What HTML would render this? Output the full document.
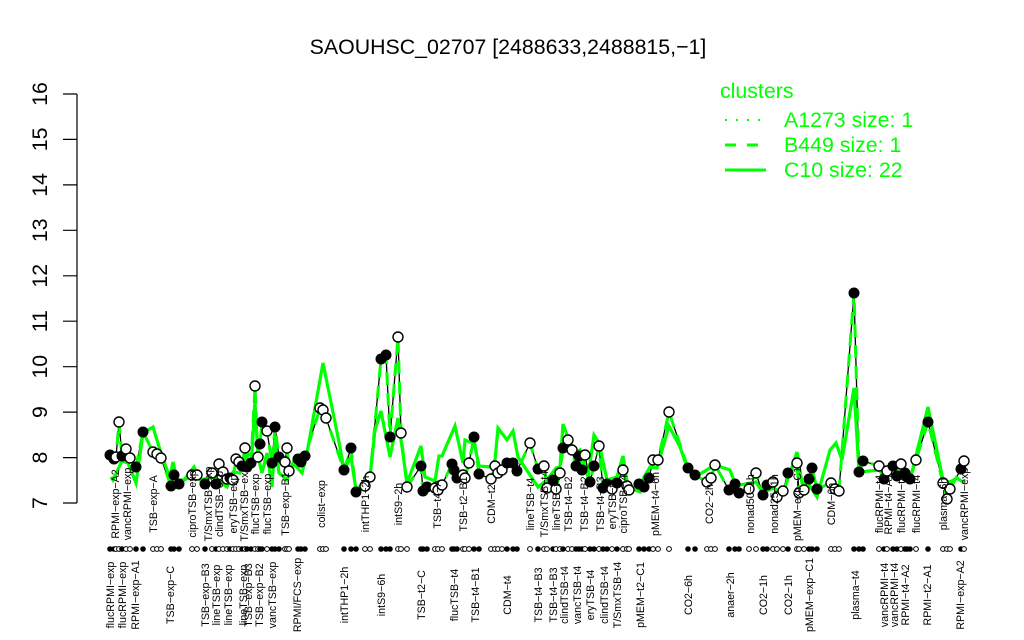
<!DOCTYPE html>
<html><head><meta charset="utf-8"><style>
html,body{margin:0;padding:0;background:#fff}
svg{display:block}
text{font-family:"Liberation Sans",sans-serif}
.l text{font-size:10.67px;text-anchor:middle;fill:#000}
.p circle.f{fill:#000;stroke:#000;stroke-width:1;r:5px}
.p circle.o{fill:#fff;stroke:#000;stroke-width:1.4px;r:5px}
.r circle.f{fill:#000;stroke:#000;stroke-width:.8;r:2.4px}
.r circle.o{fill:#fff;stroke:#000;stroke-width:1;r:2.4px}
</style></head><body>
<svg xmlns="http://www.w3.org/2000/svg" width="1024" height="640" viewBox="0 0 1024 640">
<rect width="1024" height="640" fill="#fff"/>
<text x="508" y="54" font-size="21.33" text-anchor="middle">SAOUHSC_02707 [2488633,2488815,−1]</text>
<g stroke="#000" stroke-width="1.2" fill="none">
<path d="M77 94V503M63 94H77M63 139.400H77M63 184.900H77M63 230.300H77M63 275.800H77M63 321.200H77M63 366.700H77M63 412.100H77M63 457.600H77M63 503H77"/>
</g>
<g font-size="21.33" text-anchor="middle">
<text transform="translate(47,94) rotate(-90)">16</text>
<text transform="translate(47,139.400) rotate(-90)">15</text>
<text transform="translate(47,184.900) rotate(-90)">14</text>
<text transform="translate(47,230.300) rotate(-90)">13</text>
<text transform="translate(47,275.800) rotate(-90)">12</text>
<text transform="translate(47,321.200) rotate(-90)">11</text>
<text transform="translate(47,366.700) rotate(-90)">10</text>
<text transform="translate(47,412.100) rotate(-90)">9</text>
<text transform="translate(47,457.600) rotate(-90)">8</text>
<text transform="translate(47,503) rotate(-90)">7</text>
</g>
<path id="b" fill="none" stroke="#000" stroke-width="1.3" d="M110 455L114 459L116 457L119 422L122 456L126 449L130 458L136 467L143 432L153 452L157 454L161 458L171 486L174 475L179 484L192 475L197 475L205 484L212 473L216 484L219 464L223 472L227 479L230 478L233 480L236 459L239 462L242 466L245 448L247 467L251 463L255 386L258 457L260 444L262 422L267 431L272 463L275 427L279 457L285 462L287 448L289 471L298 459L301 462L305 456L320 408L323 410L326 418L344 470L351 448L356 492L365 486L370 477L381 359L386 355L390 437L398 337L401 433L407 487L421 466L423 491L427 487L435 488L438 490L442 485L452 464L454 470L457 478L463 475L465 478L469 463L474 437L479 474L491 479L495 466L498 473L502 470L507 463L513 463L517 471L530 443L538 469L544 466L547 488L553 480L556 489L560 473L563 448L568 440L572 450L576 466L579 456L582 470L585 455L590 482L594 466L599 446L603 488L607 484L612 489L617 483L623 470L627 486L629 490L639 484L644 487L649 478L653 460L658 460L669 412L688 468L695 475L707 482L711 478L715 465L729 490L735 484L739 493L749 489L756 473L763 495L767 485L773 482L777 497L783 491L788 473L797 463L799 493L804 490L809 479L812 468L817 489L831 483L835 489L839 491L854 293L859 472L863 461L879 466L884 479L887 471L893 466L897 476L901 464L905 473L907 477L910 479L916 460L928 422L943 483L947 499L950 489L961 469L964 461"/>
<path fill="none" stroke="#00ff00" stroke-width="3" stroke-dasharray="13 8" d="M110 455L114 459L116 457L119 422L122 456L126 449L130 458L136 467L143 432L153 452L157 454L161 458L171 486L174 475L179 484L192 475L197 475L205 484L212 473L216 484L219 464L223 472L227 479L230 478L233 480L236 459L239 462L242 466L245 448L247 467L251 463L255 386L258 457L260 444L262 422L267 431L272 463L275 427L279 457L285 462L287 448L289 471L298 459L301 462L305 456L320 408L323 410L326 418L344 470L351 448L356 492L365 486L370 477L381 359L386 355L390 437L398 337L401 433L407 487L421 466L423 491L427 487L435 488L438 490L442 485L452 464L454 470L457 478L463 475L465 478L469 463L474 437L479 474L491 479L495 466L498 473L502 470L507 463L513 463L517 471L530 443L538 469L544 466L547 488L553 480L556 489L560 473L563 448L568 440L572 450L576 466L579 456L582 470L585 455L590 482L594 466L599 446L603 488L607 484L612 489L617 483L623 470L627 486L629 490L639 484L644 487L649 478L653 460L658 460L669 412L688 468L695 475L707 482L711 478L715 465L729 490L735 484L739 493L749 489L756 473L763 495L767 485L773 482L777 497L783 491L788 473L797 463L799 493L804 490L809 479L812 468L817 489L831 483L835 489L839 491L854 293L859 472L863 461L879 466L884 479L887 471L893 466L897 476L901 464L905 473L907 477L910 479L916 460L928 422L943 483L947 499L950 489L961 469L964 461"/>
<path fill="none" stroke="#00ff00" stroke-width="3.2" stroke-linejoin="miter" d="M111 477L113 480L122 461L128 463L136 483L143 433L153 427L160 450L167 470L170 477L173 462L177 480L184 480L194 467L200 480L213 477L227 487L233 472L240 473L248 455L252 453L255 403L258 457L262 473L267 453L272 487L275 440L279 473L287 480L293 463L302 473L307 453L323 363L340 447L344 470L351 457L356 490L370 477L375 430L381 411L390 457L398 418L407 483L421 446L425 477L435 481L439 456L442 456L455 426L463 463L465 440L470 442L474 442L479 466L490 467L495 460L498 428L507 440L513 431L518 457L538 487L547 480L556 468L560 467L563 424L570 443L577 452L580 450L588 477L594 435L599 443L607 480L617 477L623 456L628 487L640 492L644 477L650 467L657 468L669 426L680 447L688 470L695 477L715 465L730 470L735 483L740 485L756 482L763 493L773 488L783 493L797 452L802 483L808 483L817 497L830 450L836 443L842 460L854 388L859 472L880 470L884 480L893 466L910 480L928 407L943 480L950 482L957 478L964 483"/>
<g class="p">
<circle class="f" cx="110" cy="455"/><circle class="f" cx="114" cy="459"/><circle class="o" cx="116" cy="457"/><circle class="o" cx="119" cy="422"/><circle class="f" cx="122" cy="456"/><circle class="o" cx="126" cy="449"/><circle class="o" cx="130" cy="458"/><circle class="f" cx="136" cy="467"/><circle class="f" cx="143" cy="432"/><circle class="o" cx="153" cy="452"/><circle class="o" cx="157" cy="454"/><circle class="o" cx="161" cy="458"/><circle class="f" cx="171" cy="486"/><circle class="f" cx="174" cy="475"/><circle class="f" cx="179" cy="484"/><circle class="o" cx="192" cy="475"/><circle class="o" cx="197" cy="475"/><circle class="f" cx="205" cy="484"/><circle class="o" cx="212" cy="473"/><circle class="f" cx="216" cy="484"/><circle class="o" cx="219" cy="464"/><circle class="o" cx="223" cy="472"/><circle class="o" cx="227" cy="479"/><circle class="f" cx="230" cy="478"/><circle class="o" cx="233" cy="480"/><circle class="o" cx="236" cy="459"/><circle class="o" cx="239" cy="462"/><circle class="f" cx="242" cy="466"/><circle class="o" cx="245" cy="448"/><circle class="f" cx="247" cy="467"/><circle class="f" cx="251" cy="463"/><circle class="o" cx="255" cy="386"/><circle class="o" cx="258" cy="457"/><circle class="f" cx="260" cy="444"/><circle class="f" cx="262" cy="422"/><circle class="o" cx="267" cy="431"/><circle class="f" cx="272" cy="463"/><circle class="f" cx="275" cy="427"/><circle class="f" cx="279" cy="457"/><circle class="o" cx="285" cy="462"/><circle class="o" cx="287" cy="448"/><circle class="o" cx="289" cy="471"/><circle class="f" cx="298" cy="459"/><circle class="f" cx="301" cy="462"/><circle class="f" cx="305" cy="456"/><circle class="o" cx="320" cy="408"/><circle class="o" cx="323" cy="410"/><circle class="o" cx="326" cy="418"/><circle class="f" cx="344" cy="470"/><circle class="f" cx="351" cy="448"/><circle class="f" cx="356" cy="492"/><circle class="o" cx="365" cy="486"/><circle class="o" cx="370" cy="477"/><circle class="f" cx="381" cy="359"/><circle class="f" cx="386" cy="355"/><circle class="f" cx="390" cy="437"/><circle class="o" cx="398" cy="337"/><circle class="o" cx="401" cy="433"/><circle class="o" cx="407" cy="487"/><circle class="f" cx="421" cy="466"/><circle class="f" cx="423" cy="491"/><circle class="f" cx="427" cy="487"/><circle class="o" cx="435" cy="488"/><circle class="o" cx="438" cy="490"/><circle class="o" cx="442" cy="485"/><circle class="f" cx="452" cy="464"/><circle class="f" cx="454" cy="470"/><circle class="f" cx="457" cy="478"/><circle class="o" cx="463" cy="475"/><circle class="o" cx="465" cy="478"/><circle class="o" cx="469" cy="463"/><circle class="f" cx="474" cy="437"/><circle class="f" cx="479" cy="474"/><circle class="o" cx="491" cy="479"/><circle class="o" cx="495" cy="466"/><circle class="o" cx="498" cy="473"/><circle class="o" cx="502" cy="470"/><circle class="f" cx="507" cy="463"/><circle class="f" cx="513" cy="463"/><circle class="f" cx="517" cy="471"/><circle class="o" cx="530" cy="443"/><circle class="f" cx="538" cy="469"/><circle class="o" cx="544" cy="466"/><circle class="o" cx="547" cy="488"/><circle class="f" cx="553" cy="480"/><circle class="o" cx="556" cy="489"/><circle class="o" cx="560" cy="473"/><circle class="f" cx="563" cy="448"/><circle class="o" cx="568" cy="440"/><circle class="o" cx="572" cy="450"/><circle class="f" cx="576" cy="466"/><circle class="f" cx="579" cy="456"/><circle class="f" cx="582" cy="470"/><circle class="o" cx="585" cy="455"/><circle class="f" cx="590" cy="482"/><circle class="f" cx="594" cy="466"/><circle class="o" cx="599" cy="446"/><circle class="f" cx="603" cy="488"/><circle class="f" cx="607" cy="484"/><circle class="o" cx="612" cy="489"/><circle class="f" cx="617" cy="483"/><circle class="o" cx="623" cy="470"/><circle class="o" cx="627" cy="486"/><circle class="o" cx="629" cy="490"/><circle class="f" cx="639" cy="484"/><circle class="f" cx="644" cy="487"/><circle class="f" cx="649" cy="478"/><circle class="o" cx="653" cy="460"/><circle class="o" cx="658" cy="460"/><circle class="o" cx="669" cy="412"/><circle class="f" cx="688" cy="468"/><circle class="f" cx="695" cy="475"/><circle class="o" cx="707" cy="482"/><circle class="o" cx="711" cy="478"/><circle class="o" cx="715" cy="465"/><circle class="f" cx="729" cy="490"/><circle class="f" cx="735" cy="484"/><circle class="f" cx="739" cy="493"/><circle class="o" cx="749" cy="489"/><circle class="o" cx="756" cy="473"/><circle class="f" cx="763" cy="495"/><circle class="f" cx="767" cy="485"/><circle class="o" cx="773" cy="482"/><circle class="o" cx="777" cy="497"/><circle class="o" cx="783" cy="491"/><circle class="f" cx="788" cy="473"/><circle class="o" cx="797" cy="463"/><circle class="o" cx="799" cy="493"/><circle class="o" cx="804" cy="490"/><circle class="f" cx="809" cy="479"/><circle class="f" cx="812" cy="468"/><circle class="f" cx="817" cy="489"/><circle class="o" cx="831" cy="483"/><circle class="o" cx="835" cy="489"/><circle class="o" cx="839" cy="491"/><circle class="f" cx="854" cy="293"/><circle class="f" cx="859" cy="472"/><circle class="f" cx="863" cy="461"/><circle class="o" cx="879" cy="466"/><circle class="f" cx="884" cy="479"/><circle class="o" cx="887" cy="471"/><circle class="f" cx="893" cy="466"/><circle class="f" cx="897" cy="476"/><circle class="o" cx="901" cy="464"/><circle class="f" cx="905" cy="473"/><circle class="f" cx="907" cy="477"/><circle class="f" cx="910" cy="479"/><circle class="o" cx="916" cy="460"/><circle class="f" cx="928" cy="422"/><circle class="o" cx="943" cy="483"/><circle class="o" cx="947" cy="499"/><circle class="o" cx="950" cy="489"/><circle class="f" cx="961" cy="469"/><circle class="o" cx="964" cy="461"/>
</g>
<g class="r" transform="translate(0,549)">
<circle class="f" cx="110"/><circle class="f" cx="114"/><circle class="o" cx="116"/><circle class="o" cx="119"/><circle class="f" cx="122"/><circle class="o" cx="126"/><circle class="o" cx="130"/><circle class="f" cx="136"/><circle class="f" cx="143"/><circle class="o" cx="153"/><circle class="o" cx="157"/><circle class="o" cx="161"/><circle class="f" cx="171"/><circle class="f" cx="174"/><circle class="f" cx="179"/><circle class="o" cx="192"/><circle class="o" cx="197"/><circle class="f" cx="205"/><circle class="o" cx="212"/><circle class="f" cx="216"/><circle class="o" cx="219"/><circle class="o" cx="223"/><circle class="o" cx="227"/><circle class="f" cx="230"/><circle class="o" cx="233"/><circle class="o" cx="236"/><circle class="o" cx="239"/><circle class="f" cx="242"/><circle class="o" cx="245"/><circle class="f" cx="247"/><circle class="f" cx="251"/><circle class="o" cx="255"/><circle class="o" cx="258"/><circle class="f" cx="260"/><circle class="f" cx="262"/><circle class="o" cx="267"/><circle class="f" cx="272"/><circle class="f" cx="275"/><circle class="f" cx="279"/><circle class="o" cx="285"/><circle class="o" cx="287"/><circle class="o" cx="289"/><circle class="f" cx="298"/><circle class="f" cx="301"/><circle class="f" cx="305"/><circle class="o" cx="320"/><circle class="o" cx="323"/><circle class="o" cx="326"/><circle class="f" cx="344"/><circle class="f" cx="351"/><circle class="f" cx="356"/><circle class="o" cx="365"/><circle class="o" cx="370"/><circle class="f" cx="381"/><circle class="f" cx="386"/><circle class="f" cx="390"/><circle class="o" cx="398"/><circle class="o" cx="401"/><circle class="o" cx="407"/><circle class="f" cx="421"/><circle class="f" cx="423"/><circle class="f" cx="427"/><circle class="o" cx="435"/><circle class="o" cx="438"/><circle class="o" cx="442"/><circle class="f" cx="452"/><circle class="f" cx="454"/><circle class="f" cx="457"/><circle class="o" cx="463"/><circle class="o" cx="465"/><circle class="o" cx="469"/><circle class="f" cx="474"/><circle class="f" cx="479"/><circle class="o" cx="491"/><circle class="o" cx="495"/><circle class="o" cx="498"/><circle class="o" cx="502"/><circle class="f" cx="507"/><circle class="f" cx="513"/><circle class="f" cx="517"/><circle class="o" cx="530"/><circle class="f" cx="538"/><circle class="o" cx="544"/><circle class="o" cx="547"/><circle class="f" cx="553"/><circle class="o" cx="556"/><circle class="o" cx="560"/><circle class="f" cx="563"/><circle class="o" cx="568"/><circle class="o" cx="572"/><circle class="f" cx="576"/><circle class="f" cx="579"/><circle class="f" cx="582"/><circle class="o" cx="585"/><circle class="f" cx="590"/><circle class="f" cx="594"/><circle class="o" cx="599"/><circle class="f" cx="603"/><circle class="f" cx="607"/><circle class="o" cx="612"/><circle class="f" cx="617"/><circle class="o" cx="623"/><circle class="o" cx="627"/><circle class="o" cx="629"/><circle class="f" cx="639"/><circle class="f" cx="644"/><circle class="f" cx="649"/><circle class="o" cx="653"/><circle class="o" cx="658"/><circle class="o" cx="669"/><circle class="f" cx="688"/><circle class="f" cx="695"/><circle class="o" cx="707"/><circle class="o" cx="711"/><circle class="o" cx="715"/><circle class="f" cx="729"/><circle class="f" cx="735"/><circle class="f" cx="739"/><circle class="o" cx="749"/><circle class="o" cx="756"/><circle class="f" cx="763"/><circle class="f" cx="767"/><circle class="o" cx="773"/><circle class="o" cx="777"/><circle class="o" cx="783"/><circle class="f" cx="788"/><circle class="o" cx="797"/><circle class="o" cx="799"/><circle class="o" cx="804"/><circle class="f" cx="809"/><circle class="f" cx="812"/><circle class="f" cx="817"/><circle class="o" cx="831"/><circle class="o" cx="835"/><circle class="o" cx="839"/><circle class="f" cx="854"/><circle class="f" cx="859"/><circle class="f" cx="863"/><circle class="o" cx="879"/><circle class="f" cx="884"/><circle class="o" cx="887"/><circle class="f" cx="893"/><circle class="f" cx="897"/><circle class="o" cx="901"/><circle class="f" cx="905"/><circle class="f" cx="907"/><circle class="f" cx="910"/><circle class="o" cx="916"/><circle class="f" cx="928"/><circle class="o" cx="943"/><circle class="o" cx="947"/><circle class="o" cx="950"/><circle class="f" cx="961"/><circle class="o" cx="964"/>
</g>
<g class="l" transform="translate(4,0)">
<text transform="translate(115,504) rotate(-90)">RPMI−exp−A2</text>
<text transform="translate(127,504) rotate(-90)">vancRPMI−exp</text>
<text transform="translate(153,504) rotate(-90)">TSB−exp−A</text>
<text transform="translate(192,504) rotate(-90)">ciproTSB−exp</text>
<text transform="translate(208,504) rotate(-90)">T/SmxTSB−exp</text>
<text transform="translate(219,504) rotate(-90)">clindTSB−exp</text>
<text transform="translate(233,504) rotate(-90)">eryTSB−exp</text>
<text transform="translate(244,504) rotate(-90)">T/SmxTSB−exp</text>
<text transform="translate(255,504) rotate(-90)">flucTSB−exp</text>
<text transform="translate(267,504) rotate(-90)">flucTSB−exp</text>
<text transform="translate(285,504) rotate(-90)">TSB−exp−B1</text>
<text transform="translate(321,504) rotate(-90)">colist−exp</text>
<text transform="translate(365,504) rotate(-90)">intTHP1−2h</text>
<text transform="translate(398,504) rotate(-90)">intS9−2h</text>
<text transform="translate(437,504) rotate(-90)">TSB−t4−A</text>
<text transform="translate(463,504) rotate(-90)">TSB−t2−B1</text>
<text transform="translate(491,504) rotate(-90)">CDM−t2</text>
<text transform="translate(530,504) rotate(-90)">lineTSB−t4</text>
<text transform="translate(544,504) rotate(-90)">T/SmxTSB−t4</text>
<text transform="translate(556,504) rotate(-90)">lineTSB−t4</text>
<text transform="translate(568,504) rotate(-90)">TSB−t4−B2</text>
<text transform="translate(584,504) rotate(-90)">TSB−t4−B2</text>
<text transform="translate(600,504) rotate(-90)">TSB−t4−B3</text>
<text transform="translate(612,504) rotate(-90)">eryTSB−t4</text>
<text transform="translate(623,504) rotate(-90)">ciproTSB−t4</text>
<text transform="translate(655,504) rotate(-90)">pMEM−t4−6h</text>
<text transform="translate(709,504) rotate(-90)">CO2−2h</text>
<text transform="translate(750,504) rotate(-90)">nonad50−1h</text>
<text transform="translate(774,504) rotate(-90)">nonad25−1h</text>
<text transform="translate(797,504) rotate(-90)">pMEM−exp−C1</text>
<text transform="translate(831,504) rotate(-90)">CDM−6h</text>
<text transform="translate(879,504) rotate(-90)">flucRPMI−t4</text>
<text transform="translate(888,504) rotate(-90)">RPMI−t4−A1</text>
<text transform="translate(901,504) rotate(-90)">flucRPMI−t4</text>
<text transform="translate(916,504) rotate(-90)">flucRPMI−t4</text>
<text transform="translate(943,504) rotate(-90)">plasma−6h</text>
<text transform="translate(964,504) rotate(-90)">vancRPMI−exp</text>
</g>
<g class="l" transform="translate(1,0)">
<text transform="translate(113,595) rotate(-90)">flucRPMI−exp</text>
<text transform="translate(125,595) rotate(-90)">flucRPMI−exp</text>
<text transform="translate(138,595) rotate(-90)">RPMI−exp−A1</text>
<text transform="translate(173,595) rotate(-90)">TSB−exp−C</text>
<text transform="translate(208,595) rotate(-90)">TSB−exp−B3</text>
<text transform="translate(219,595) rotate(-90)">lineTSB−exp</text>
<text transform="translate(231,595) rotate(-90)">lineTSB−exp</text>
<text transform="translate(246,595) rotate(-90)">lineTSB−exp</text>
<text transform="translate(251,595) rotate(-90)">TSB−exp−B3</text>
<text transform="translate(262,595) rotate(-90)">TSB−exp−B2</text>
<text transform="translate(275,595) rotate(-90)">vancTSB−exp</text>
<text transform="translate(300,595) rotate(-90)">RPMI/FCS−exp</text>
<text transform="translate(347,595) rotate(-90)">intTHP1−2h</text>
<text transform="translate(384,595) rotate(-90)">intS9−6h</text>
<text transform="translate(424,595) rotate(-90)">TSB−t2−C</text>
<text transform="translate(457,595) rotate(-90)">flucTSB−t4</text>
<text transform="translate(478,595) rotate(-90)">TSB−t4−B1</text>
<text transform="translate(510,595) rotate(-90)">CDM−t4</text>
<text transform="translate(541,595) rotate(-90)">TSB−t4−B3</text>
<text transform="translate(556,595) rotate(-90)">TSB−t4−B3</text>
<text transform="translate(567,595) rotate(-90)">clindTSB−t4</text>
<text transform="translate(580,595) rotate(-90)">vancTSB−t4</text>
<text transform="translate(593,595) rotate(-90)">eryTSB−t4</text>
<text transform="translate(607,595) rotate(-90)">clindTSB−t4</text>
<text transform="translate(620,595) rotate(-90)">T/SmxTSB−t4</text>
<text transform="translate(643,595) rotate(-90)">pMEM−t2−C1</text>
<text transform="translate(691,595) rotate(-90)">CO2−6h</text>
<text transform="translate(733,595) rotate(-90)">anaer−2h</text>
<text transform="translate(766,595) rotate(-90)">CO2−1h</text>
<text transform="translate(791,595) rotate(-90)">CO2−1h</text>
<text transform="translate(812,595) rotate(-90)">pMEM−exp−C1</text>
<text transform="translate(858,595) rotate(-90)">plasma−t4</text>
<text transform="translate(887,595) rotate(-90)">vancRPMI−t4</text>
<text transform="translate(897,595) rotate(-90)">vancRPMI−t4</text>
<text transform="translate(908,595) rotate(-90)">RPMI−t4−A2</text>
<text transform="translate(930,595) rotate(-90)">RPMI−t2−A1</text>
<text transform="translate(963,595) rotate(-90)">RPMI−exp−A2</text>
</g>
<g fill="#00ff00" font-size="21.33">
<text x="720" y="98">clusters</text>
<text x="784" y="127">A1273 size: 1</text>
<text x="784" y="152">B449 size: 1</text>
<text x="784" y="177">C10 size: 22</text>
</g>
<g stroke="#00ff00" fill="none">
<path d="M725 120H727M736 120H738M747 120H749M758 120H760" stroke-width="2"/>
<path d="M725 145H736M747 145H758" stroke-width="3"/>
<path d="M725 170H766" stroke-width="3"/>
</g>
</svg>
</body></html>
